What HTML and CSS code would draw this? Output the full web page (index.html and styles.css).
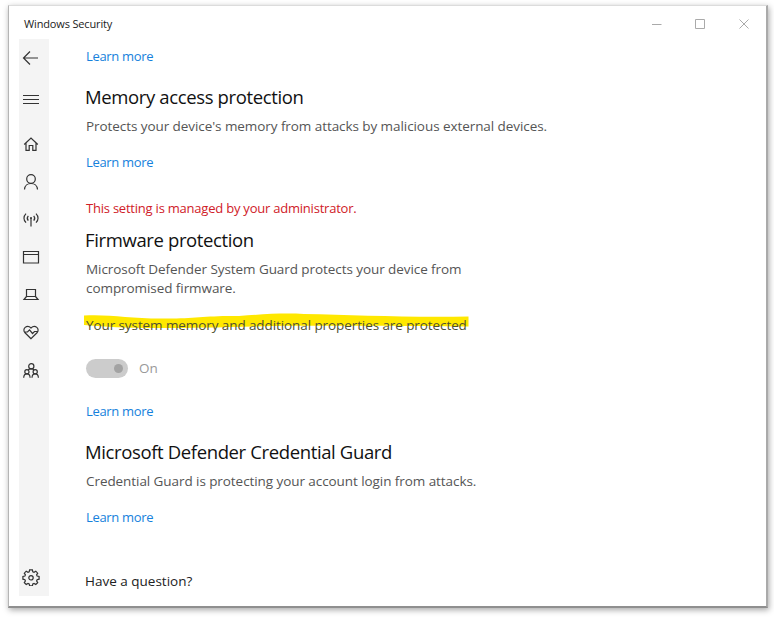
FILE: index.html
```
<!DOCTYPE html>
<html lang="en">
<head>
<meta charset="utf-8">
<title>Windows Security</title>
<link rel="stylesheet" href="styles.css">
</head>
<body>
<div class="window">
  <header class="titlebar">
    <span class="title">Windows Security</span>
    <div class="controls">
      <svg width="10" height="12" viewBox="0 0 10 12"><path d="M0 6.500h9.500"/></svg>
      <svg width="12" height="12" viewBox="0 0 12 12"><path d="M1.500 1.500h9v9h-9z"/></svg>
      <svg width="12" height="12" viewBox="0 0 12 12"><path d="M1.500 1.500l9 9M10.500 1.500l-9 9"/></svg>
    </div>
  </header>
  <div class="body">
    <nav class="sidebar">
      <svg class="icon back" viewBox="0 0 18 18"><path d="M1.500 9H16M8 2.500L1.500 9 8 15.500"/></svg>
      <svg class="icon menu" viewBox="0 0 18 18"><path d="M1 5.500h16M1 9.500h16M1 13.500h16"/></svg>
      <svg class="icon home" viewBox="0 0 18 18"><path d="M2.200 9.500L9 3l6.800 6.500M4 8v7.300h3.200v-4.800h3.600v4.800H14V8"/></svg>
      <svg class="icon" viewBox="0 0 18 18"><circle cx="9" cy="6" r="4.300"/><path d="M2.500 16.500c.5-8 12.500-8 13 0"/></svg>
      <svg class="icon" viewBox="0 0 18 18"><path d="M9 8v8.500M6.300 5.800c-1.300 1.500-1.300 3.400 0 4.900M11.700 5.800c1.300 1.500 1.300 3.400 0 4.900M4 3.700c-2.700 2.700-2.700 6.300 0 9M14 3.700c2.700 2.700 2.700 6.300 0 9"/><circle class="dot" cx="9" cy="8" r="1"/></svg>
      <svg class="icon" viewBox="0 0 18 18"><path d="M1.500 3.500h15v11.500h-15zM1.500 6.500h15"/></svg>
      <svg class="icon" viewBox="0 0 18 18"><path d="M4.500 4.500h9v7h-9zM4.500 11.500L2 14.500h14l-2.500-3"/></svg>
      <svg class="icon" viewBox="0 0 18 18"><path d="M9 15.700L3 9.800C-.5 6 5 .8 9 5c4-4.200 9.500 1 6 4.800zM2.500 9h3l2-2.200 3 3.700 2-2h3"/></svg>
      <svg class="icon people" viewBox="0 0 18 18"><circle cx="9.300" cy="4.300" r="2.600"/><circle cx="4.900" cy="9.800" r="2.100"/><circle cx="13.200" cy="9.800" r="2.100"/><path d="M1.700 15.800c.2-5.200 6.200-5.200 6.400 0M10 15.800c.2-5.200 6.200-5.200 6.400 0M6 8c1.500-1.500 4.800-1.500 6.300 0"/></svg>
      <svg class="icon settings" viewBox="0 0 18 18"><path d="M7.600 1.800h2.800l.4 2 1.200.5 1.800-1.100 1.900 2-1.100 1.700.5 1.100 2 .5v2.700l-2 .5-.5 1.200 1.100 1.700-1.900 1.900-1.800-1.100-1.200.5-.4 1.900H7.600l-.4-1.900-1.200-.5-1.800 1.100-1.900-1.900 1.100-1.700-.5-1.200-2-.5V8.500l2-.5.5-1.100-1.100-1.700 1.900-2L6 4.300l1.200-.5z"/><circle cx="9" cy="9.800" r="2.200"/></svg>
    </nav>
    <main class="content">
      <a class="link">Learn more</a>
      <h2 class="h-memory">Memory access protection</h2>
      <p class="p-memory">Protects your device's memory from attacks by malicious external devices.</p>
      <a class="link spaced">Learn more</a>
      <p class="managed">This setting is managed by your administrator.</p>
      <h2 class="h-firmware">Firmware protection</h2>
      <p class="p-firmware">Microsoft Defender System Guard protects your device from<br>compromised firmware.</p>
      <div class="status">
        <svg class="marker" width="386" height="18" viewBox="0 0 386 18"><path d="M0 2.500C25 1 45 5.500 77 5.500 110 6 120 2.500 155 3 180 1 200 0 220 1c50 1 100 3.500 164.500 2.500v10C290 13 240 12.500 190 13c-45 1-80 2-115 2C50 15.500 25 14 0 12z"/></svg>
        <p class="p-status">Your system memory and additional properties are protected</p>
      </div>
      <div class="toggle-row"><span class="toggle"><span class="knob"></span></span><span class="state">On</span></div>
      <a class="link after-toggle">Learn more</a>
      <h2 class="h-credential">Microsoft Defender Credential Guard</h2>
      <p class="p-credential">Credential Guard is protecting your account login from attacks.</p>
      <a class="link spaced">Learn more</a>
      <p class="question">Have a question?</p>
    </main>
  </div>
</div>
</body>
</html>
```
FILE: styles.css
```
* { box-sizing: border-box; }
body { margin: 0; height: 620px; padding: 5px 6px 12px 8px; background: #fff; overflow: hidden; font-family: "Open Sans", "Noto Sans", sans-serif; font-size: 13.500px; line-height: 20px; letter-spacing: -0.070px; color: #555; }
.window { width: 760px; height: 603px; background: #fff; border: 1px solid; border-color: #dcdcdc #aaa #8f8f8f #b5b5b5; border-bottom-width: 2px; border-right-width: 2px; box-shadow: 1px 2px 6px rgba(0,0,0,.35); }
.titlebar { height: 33px; padding: 4px 16px 0 15px; display: flex; align-items: flex-start; justify-content: space-between; }
.title { color: #222; font-size: 11px; line-height: 28px; letter-spacing: -0.150px; }
.controls { display: flex; gap: 32px; padding-top: 8px; }
.controls svg { fill: none; stroke: #aaa; }
.body { display: flex; padding-left: 10px; height: 557px; }
.sidebar { width: 30px; background: #f4f4f4; display: flex; flex-direction: column; padding: 10px 0 10px 3px; }
.icon { width: 18px; height: 18px; margin-bottom: 19.500px; fill: none; stroke: #333; stroke-width: 1.200; flex: none; }
.back { margin-bottom: 23px; }
.menu { margin-bottom: 27px; }
.people { margin-top: 1.500px; }
.settings { margin: auto 0 0; }
.dot { fill: #333; stroke: none; }
.content { padding: 7px 0 0 37px; display: flex; flex-direction: column; align-items: flex-start; }
p, h2 { margin: 0; white-space: nowrap; }
h2 { color: #111; font-size: 18.500px; line-height: 28px; font-weight: 400; letter-spacing: -0.370px; margin-left: -1px; }
.link { color: #1681dc; font-size: 13px; letter-spacing: -0.330px; }
.spaced { margin-top: 16px; }
.h-memory { margin-top: 17px; }
.p-memory { margin-top: 5px; }
.managed { color: #d02028; font-size: 13px; letter-spacing: -0.220px; margin-top: 26px; }
.h-firmware { margin-top: 8px; }
.p-firmware { margin-top: 5.500px; line-height: 19px; }
.status { position: relative; margin-top: 17.500px; }
.marker { position: absolute; left: -2px; top: -2px; fill: #ffe800; }
.p-status { position: relative; color: #505030; letter-spacing: -0.090px; }
.toggle-row { display: flex; align-items: center; gap: 11px; height: 20px; margin-top: 23px; }
.toggle { width: 42px; height: 19px; border-radius: 10px; background: #ccc; padding: 5px; display: flex; justify-content: flex-end; }
.knob { width: 9px; height: 9px; border-radius: 50%; background: #a3a3a3; }
.state { color: #999; }
.after-toggle { margin-top: 23px; }
.h-credential { margin-top: 17px; }
.p-credential { margin-top: 5px; }
.question { color: #222; letter-spacing: 0; margin-top: 44px; margin-left: -1px; }
```
